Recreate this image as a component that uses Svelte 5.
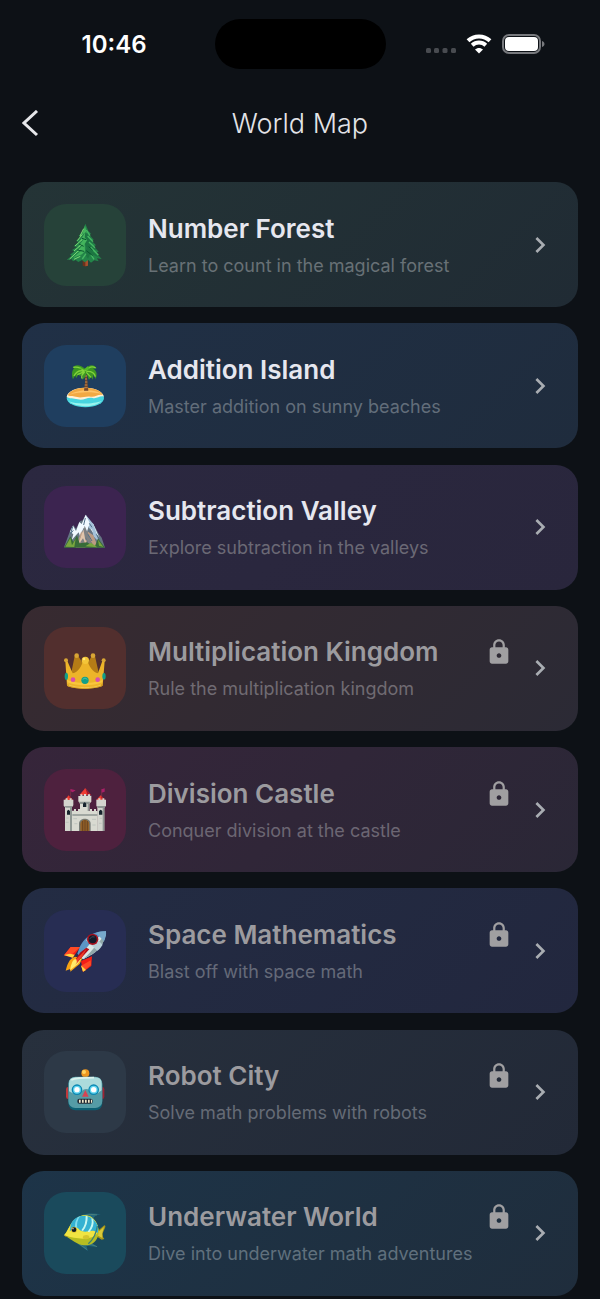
<script>
    let worlds = [
        { id: "forest", title: "Number Forest", text: "Learn to count in the magical forest", locked: false },
        { id: "island", title: "Addition Island", text: "Master addition on sunny beaches", locked: false },
        { id: "valley", title: "Subtraction Valley", text: "Explore subtraction in the valleys", locked: false },
        { id: "kingdom", title: "Multiplication Kingdom", text: "Rule the multiplication kingdom", locked: true },
        { id: "castle", title: "Division Castle", text: "Conquer division at the castle", locked: true },
        { id: "space", title: "Space Mathematics", text: "Blast off with space math", locked: true },
        { id: "robot", title: "Robot City", text: "Solve math problems with robots", locked: true },
        { id: "water", title: "Underwater World", text: "Dive into underwater math adventures", locked: true }
    ];
</script>

<div class="screen">
    <div class="status-bar">
        <span class="time">10:46</span>
        <div class="camera"></div>
        <div class="signals">
            <svg class="dots" viewBox="0 0 30 6" aria-hidden="true">
                <rect x="0" y="0" width="5" height="5" rx="1.5" />
                <rect x="8" y="0" width="5" height="5" rx="1.5" />
                <rect x="16.500" y="0" width="5" height="5" rx="1.5" />
                <rect x="25" y="0" width="5" height="5" rx="1.5" />
            </svg>
            <svg class="wifi" viewBox="0 0 26 20" aria-hidden="true">
                <path d="M2 6.800C8.200 .9 17.800 .9 24 6.800" />
                <path d="M6.200 11.200C10 7.700 16 7.700 19.800 11.200" />
                <path class="tip" d="M13 19.500L9 15.500C11.200 13.400 14.800 13.400 17 15.500Z" />
            </svg>
            <svg class="battery" viewBox="0 0 43 20" aria-hidden="true">
                <rect class="shell" x="1" y="1" width="37" height="18" rx="6" />
                <rect x="3" y="3" width="33" height="14" rx="4" fill="#fff" />
                <path d="M40 7C43.300 8 43.300 12 40 13Z" fill="#77797d" />
            </svg>
        </div>
    </div>

    <header>
        <button class="back" aria-label="Back">
            <svg viewBox="0 0 18 28" aria-hidden="true"><path d="M15 1L2 13L15 25" /></svg>
        </button>
        <h1>World Map</h1>
    </header>

    <ul class="worlds">
        {#each worlds as world}
            <li>
                <button class="card {world.id}" class:locked={world.locked}>
                    <span class="badge">
                        <svg viewBox="0 0 132 132" aria-hidden="true">
                            {#if world.id === "forest"}
                                <path d="M59 106H75V128Q67 132 59 128Z" fill="#6b321d" />
                                <path d="M67 106H75V128L67 130Z" fill="#a4502d" />
                                <path d="M67 2L76 24L84 32L79 35L92 50L86 53L99 67L92 70L107 86L99 89L116 108L102 106L107 115L94 112L84 119L76 111L65 118L57 111L46 117L38 111L30 115L26 109L11 111L26 98L21 95L34 85L27 81L42 72L32 70L46 57L39 54L52 43L47 39L58 27Z" fill="#238449" />
                                <path d="M66 8L57 35L66 29L50 56L63 48L43 74L60 65L38 90L58 80L29 105L57 94L66 84L65 63L72 52L66 42L71 29Z" fill="#43b45c" />
                                <path d="M67 27L85 46L71 40L93 64L75 58L102 82L78 75L110 104L82 92L75 107L66 94L71 75L66 64L73 52L65 43Z" fill="#1d7542" />
                                <path d="M62 17L51 39M58 34L43 53M57 50L36 69M55 65L33 84M50 80L20 108M52 100L33 109" stroke="#7edb75" stroke-width="3" />
                                <path d="M70 21L81 38M74 39L90 56M78 57L96 74M83 73L106 96M69 92L58 108M84 95L93 109" stroke="#46b863" stroke-width="4" />
                                <path d="M48 63L62 70M43 81L63 85M77 71L89 82M70 83L89 98M57 46L69 50" stroke="#09542e" stroke-width="3" />
                            {:else if world.id === "island"}
                                <ellipse cx="67" cy="102" rx="56" ry="28" fill="#48d5df" />
                                <path d="M11 99C16 64 113 61 123 98C111 94 102 105 89 102C72 98 63 111 44 106C31 102 21 105 11 99Z" fill="#fff1d6" />
                                <path d="M14 94C26 64 105 63 120 93C106 89 96 101 83 98C68 95 56 103 43 99C31 97 22 99 14 94Z" fill="#f2a943" />
                                <path d="M20 92C43 76 94 73 116 90C91 83 50 83 20 92Z" fill="#ffc46a" />
                                <path d="M17 112C42 132 94 132 117 110C93 120 42 122 17 112Z" fill="#98f4ee" />
                                <path d="M64 27C70 43 65 65 63 80H76C73 57 74 40 69 26Z" fill="#75472b" />
                                <path d="M66 36H72M66 45H72M66 54H73M65 63H73M64 71H74" stroke="#c58a4a" stroke-width="3" />
                                <path d="M67 15C54 1 34 0 29 11L34 13C26 19 25 33 30 46L37 33L39 43L47 31L51 37L60 29L58 47L67 38L70 28L78 47L84 39L90 47L91 32L98 45C105 27 98 17 90 14L101 13C94 0 77 1 67 15Z" fill="#3c9721" />
                                <path d="M31 10C44 7 55 12 65 22C49 17 39 24 33 36M67 21C79 7 89 6 98 12M70 22C86 21 95 28 97 38M65 24C56 32 55 40 58 44M70 25L84 40M64 23L43 32" fill="none" stroke="#83d33b" stroke-width="4" />
                                <path d="M47 13L53 9L61 18L74 7L80 12L72 20Z" fill="#55b928" />
                            {:else if world.id === "valley"}
                                <path d="M3 127L23 73L31 60L39 71L51 48L59 46L68 29L83 52L91 57L107 86L116 98L126 128Z" fill="#657583" />
                                <path d="M68 29L56 57L49 51L39 78L30 62L21 80L31 88L26 105L47 82L51 94L62 68L70 87L77 64L91 85L88 69L109 98L91 57L83 52Z" fill="#f0f8ff" />
                                <path d="M68 29L80 53L77 69L88 74L91 94L108 111L100 83L91 57Z" fill="#a4c1d9" />
                                <path d="M55 78L38 128H67L72 107L60 98ZM73 79L79 101L94 126H105L91 91Z" fill="#bc9b83" />
                                <path d="M65 62L61 80L50 102L56 127L69 97L78 119L89 126L78 93Z" fill="#7f8183" />
                                <path d="M61 73L54 94L43 124L60 100L73 126L66 100Z" fill="#e2c5ab" />
                                <path d="M3 128L22 94L31 111L42 91L50 115L72 112L95 126L105 100L126 128Z" fill="#386c38" />
                                <path d="M7 125L22 99L27 121L38 101L34 126ZM67 124L84 113L103 127ZM105 104L121 126L108 122Z" fill="#79a63f" />
                                <path d="M29 65L23 86L31 76M67 39L62 60M79 55L87 67M75 88L87 108M100 88L111 106" fill="none" stroke="#506f89" stroke-width="3" />
                            {:else if world.id === "kingdom"}
                                <path d="M35 31H46L61 54L66 42L72 54L86 31H96L108 84V104H24V84Z" fill="#b57c16" />
                                <path d="M7 45H13L29 82C45 79 57 61 61 40H72C77 61 90 79 105 82L118 45H125L119 119C94 131 36 131 12 119Z" fill="#edb429" />
                                <path d="M12 101C35 113 95 114 119 101L118 109C91 121 40 121 13 109Z" fill="#f8c63e" />
                                <path d="M13 114C39 127 95 127 118 114V120C94 131 36 131 13 120Z" fill="#d49a1e" />
                                <path d="M17 117C41 127 90 128 114 117" fill="none" stroke="#ffdf68" stroke-width="2" />
                                <g fill="#d8a535"><circle cx="9" cy="43" r="6" /><circle cx="122" cy="43" r="6" /><circle cx="41" cy="29" r="7" /><circle cx="90" cy="29" r="7" /></g>
                                <circle cx="67" cy="43" r="11" fill="#f4c538" />
                                <circle cx="63" cy="39" r="4" fill="#ffe878" />
                                <g fill="#109f88"><ellipse cx="10" cy="91" rx="5" ry="11" /><circle cx="66" cy="103" r="11" /><ellipse cx="123" cy="91" rx="5" ry="10" /></g>
                                <circle cx="30" cy="101" r="7" fill="#d94eab" />
                                <circle cx="104" cy="101" r="7" fill="#d94eab" />
                                <path d="M59 100Q66 92 73 100" fill="none" stroke="#4cc5a6" stroke-width="3" />
                            {:else if world.id === "castle"}
                                <path d="M23 26V3M66 20V0M116 26V3" stroke="#8d344c" stroke-width="2" />
                                <path d="M23 3L38 7L29 13L23 10ZM116 4L125 1V11L116 14Z" fill="#a81f68" />
                                <path d="M5 36L17 22L30 36ZM49 21L67 1L84 21ZM100 36L113 22L127 36Z" fill="#ef3d32" />
                                <path d="M67 1L74 21H84ZM18 23L22 36H30ZM113 23L118 36H127Z" fill="#9f192b" />
                                <path d="M46 24H52V19H58V23H63V18H69V23H75V19H81V23H85V41L79 47V76H51V47L46 40Z" fill="#dadbd2" />
                                <path d="M2 35H8V31H14V36H20V31H26V35H31V52L27 58V129H6V58L2 53ZM100 35H106V31H112V35H118V31H124V35H129V53L124 59V129H103V58L100 53Z" fill="#d3d4cd" />
                                <path d="M27 68H33V63H39V69H45V63H51V69H57V63H63V69H69V63H75V69H81V63H87V69H93V63H99V69H104V129H27Z" fill="#d9dad1" />
                                <path d="M21 58H27V129H21ZM74 43H79V69H74ZM119 58H124V129H119ZM28 79H103V83H28ZM4 54H27V59H8ZM47 41H82L78 48H52ZM101 54H127L124 60H105Z" fill="#8f9793" />
                                <path d="M48 129V107C48 87 83 87 83 107V129Z" fill="#777b76" />
                                <path d="M52 129V109C52 91 79 91 79 109V129Z" fill="#936027" />
                                <path d="M59 99V129M66 96V129M73 99V129" stroke="#54371e" stroke-width="2" />
                                <path d="M60 57V48Q65 38 70 48V57ZM12 80V70Q16 60 21 70V80ZM108 80V70Q113 60 118 70V80Z" fill="#17242d" />
                                <path d="M10 90H17M8 103H17M31 92H42M34 107H43M87 94H99M88 111H98M110 91H117M108 106H116" stroke="#b4bbb6" stroke-width="2" />
                            {:else if world.id === "space"}
                                <path d="M52 54H23L3 79L29 86ZM87 82L85 111L60 129L54 96Z" fill="#f51e16" />
                                <path d="M23 54L3 79L24 79L52 54ZM54 111L60 128L84 108L83 94Z" fill="#ff4b25" />
                                <path d="M3 78L29 86L35 77L21 74ZM54 109L60 128L69 123Z" fill="#ffd642" />
                                <path d="M36 83C17 90 13 107 8 125L22 120L22 128L39 114L50 105L58 88Z" fill="#f7a313" />
                                <path d="M36 91C27 94 23 112 21 124L44 106L55 90Z" fill="#ffeb6b" />
                                <path d="M129 7C104 6 80 16 64 33C49 49 48 64 43 74L60 91L78 81C105 69 126 42 129 7Z" fill="#5c96c6" />
                                <path d="M129 7L108 23C80 39 67 60 54 84L60 91L78 81C105 69 126 42 129 7Z" fill="#dae7e6" />
                                <path d="M128 14C111 35 87 66 60 91L78 81C105 69 126 42 128 14Z" fill="#90a7a9" />
                                <path d="M69 34C75 26 84 22 91 20L119 47C115 53 110 60 103 65Z" fill="#b8d0d9" />
                                <path d="M99 12L123 37C128 26 130 17 129 7C119 7 108 8 99 12Z" fill="#76a8cc" />
                                <circle cx="89" cy="31" r="17" fill="#a7121f" />
                                <circle cx="89" cy="31" r="12" fill="#131a29" />
                                <path d="M79 31Q86 19 95 24" fill="none" stroke="#3b4658" stroke-width="3" />
                                <path d="M38 91L51 71L70 56L79 61L61 80L37 107L48 90Z" fill="#b40c18" />
                                <path d="M40 90L71 59L59 81L42 101Z" fill="#ed3b27" />
                            {:else if world.id === "robot"}
                                <rect x="9" y="51" width="20" height="36" rx="7" fill="#c0393d" />
                                <rect x="106" y="51" width="18" height="36" rx="7" fill="#9d2434" />
                                <path d="M52 23Q67 14 81 23L77 31H57Z" fill="#704475" />
                                <circle cx="67" cy="10" r="12" fill="#ed9620" />
                                <circle cx="63" cy="6" r="6" fill="#ffd35f" />
                                <rect x="16" y="23" width="102" height="98" rx="21" fill="#0d6073" />
                                <rect x="16" y="20" width="102" height="94" rx="21" fill="#559ca6" />
                                <path d="M18 57V41Q18 22 37 22H97Q116 22 116 41V61Q105 73 91 69L81 61Q66 52 56 64Q42 79 18 64Z" fill="#acdbdc" />
                                <path d="M25 30Q38 23 93 23" fill="none" stroke="#dbf2ed" stroke-width="5" />
                                <g fill="#0b87b2"><circle cx="42" cy="59" r="16" /><circle cx="92" cy="59" r="16" /></g>
                                <g fill="#61d5f0"><circle cx="42" cy="59" r="12" /><circle cx="92" cy="59" r="12" /></g>
                                <g fill="#fff"><circle cx="42" cy="59" r="8" /><circle cx="92" cy="59" r="8" /></g>
                                <path d="M67 60L77 80H57Z" fill="#d74453" />
                                <rect x="43" y="86" width="46" height="15" rx="6" fill="#252c37" />
                                <path d="M48 89H53V98H48ZM57 89H62V98H57ZM66 89H71V98H66ZM75 89H80V98H75ZM84 89H87V98H84Z" fill="#f1e9ca" />
                            {:else}
                                <path d="M39 24C57 5 86 5 114 10C98 11 93 16 87 32ZM44 99L75 120L70 104L104 108L82 93Z" fill="#22697f" />
                                <path d="M44 25C66 9 88 9 102 12M49 99L72 116M78 98L102 107" fill="none" stroke="#5f8877" stroke-width="2" />
                                <path d="M98 65L124 43Q128 44 127 48L119 67Q118 78 124 84L116 86L99 75Z" fill="#a99819" />
                                <path d="M102 66L123 48L117 69L118 81L105 74Z" fill="#d8ca38" />
                                <path d="M3 73C20 55 22 24 56 14C88 6 109 38 107 65C104 96 76 112 45 98C30 91 17 81 3 73Z" fill="#b7bd22" />
                                <path d="M3 73C20 55 22 24 56 14C88 6 108 37 106 62C89 89 49 87 3 73Z" fill="#f1e442" />
                                <path d="M23 41C34 10 76 5 95 29C107 42 106 57 105 66C86 51 76 66 59 61C46 59 45 43 34 52L20 61Z" fill="#35b2d2" />
                                <path d="M68 14Q69 41 55 58L60 60Q75 42 74 16ZM85 21Q90 43 74 62L79 64Q95 45 91 26Z" fill="#c7f8f1" />
                                <path d="M45 19Q35 31 36 49L43 52Q39 33 51 16Z" fill="#82dced" />
                                <path d="M103 45Q98 80 76 98" fill="none" stroke="#3b8177" stroke-width="4" />
                                <path d="M3 73L17 77L7 77Z" fill="#967f22" />
                                <circle cx="33" cy="56" r="9" fill="#e0bd35" />
                                <circle cx="33" cy="56" r="7" fill="#111b21" />
                                <circle cx="30" cy="53" r="2" fill="#fff" />
                                <path d="M61 74Q77 68 80 79Q73 89 59 82" fill="#d6c52d" />
                            {/if}
                        </svg>
                    </span>
                    <span class="info">
                        <span class="title">{world.title}</span>
                        <span class="text">{world.text}</span>
                        {#if world.locked}
                            <svg class="lock" viewBox="0 0 24 24" role="img" aria-label="Locked">
                                <path d="M18 8h-1V6c0-2.760-2.240-5-5-5S7 3.240 7 6v2H6c-1.100 0-2 .9-2 2v10c0 1.100.9 2 2 2h12c1.100 0 2-.9 2-2V10c0-1.100-.9-2-2-2zm-6 9c-1.100 0-2-.9-2-2s.9-2 2-2 2 .9 2 2-.9 2-2 2zm3.100-9H8.900V6c0-1.710 1.390-3.100 3.100-3.100s3.100 1.390 3.100 3.100v2z" />
                            </svg>
                        {/if}
                    </span>
                    <svg class="chevron" viewBox="0 0 24 24" aria-hidden="true">
                        <path d="M10 6L8.590 7.410 13.170 12l-4.580 4.590L10 18l6-6z" />
                    </svg>
                </button>
            </li>
        {/each}
    </ul>
</div>

<style>
:global(body) {
    margin: 0;
    background: #0d1116;
}

.screen {
    display: flex;
    flex-direction: column;
    box-sizing: border-box;
    min-height: 100vh;
    padding-top: 19px;
    background: #0d1116;
    color: #e6e7ef;
    font-family: Inter, "Liberation Sans", sans-serif;
}

button {
    padding: 0;
    border: none;
    background: none;
    color: inherit;
    font: inherit;
    text-align: left;
    cursor: pointer;
}

/* status bar */
.status-bar {
    display: grid;
    grid-template-columns: 1fr auto 1fr;
    align-items: center;
}

.time {
    justify-self: end;
    padding-top: 2px;
    padding-right: 68px;
    color: #fff;
    font-size: 24px;
    font-weight: 600;
    line-height: 48px;
}

.camera {
    width: 171px;
    height: 50px;
    border-radius: 25px;
    background: #000;
}

.signals {
    display: flex;
    align-items: center;
    justify-content: flex-end;
    gap: 10px;
    padding-right: 55px;
}

.dots {
    width: 30px;
    height: 6px;
    padding-top: 13px;
    fill: #484b50;
}

.wifi {
    width: 26px;
    height: 20px;
    fill: none;
    stroke: #fff;
    stroke-width: 4;
}

.wifi .tip {
    fill: #fff;
    stroke: none;
}

.battery {
    width: 43px;
    height: 20px;
}

.shell {
    fill: none;
    stroke: #77797d;
    stroke-width: 2;
}

/* page header */
header {
    display: grid;
    grid-template-columns: 1fr auto 1fr;
    align-items: center;
    height: 110px;
    padding: 0 22px;
}

.back {
    justify-self: start;
    display: flex;
}

.back svg {
    width: 18px;
    height: 28px;
    fill: none;
    stroke: #e6e7ea;
    stroke-width: 3;
}

h1 {
    margin: 0;
    color: #e3e4e8;
    font-size: 27px;
    font-weight: 300;
    line-height: 36px;
}

/* world cards */
.worlds {
    flex: 1;
    display: flex;
    flex-direction: column;
    justify-content: space-between;
    margin: 0;
    padding: 3px 22px;
    list-style: none;
}

.card {
    display: flex;
    align-items: center;
    box-sizing: border-box;
    width: 100%;
    min-height: 125px;
    padding: 21px 22px;
    border-radius: 22px;
    background: linear-gradient(135deg, var(--from), var(--to));
}

.badge {
    display: flex;
    flex: none;
    align-items: center;
    justify-content: center;
    width: 82px;
    height: 82px;
    margin-right: 22px;
    border-radius: 22px;
    background: var(--badge);
}

.badge svg {
    width: 44px;
    height: 44px;
    overflow: visible;
}

.info {
    flex: 1;
    display: grid;
    grid-template-columns: 1fr auto;
    align-items: center;
    row-gap: 8px;
    padding-top: 2px;
}

.title {
    grid-area: 1 / 1;
    font-size: 26px;
    font-weight: 600;
    line-height: 32px;
}

.text {
    grid-area: 2 / 1 / 3 / 3;
    color: var(--muted);
    font-size: 18px;
    line-height: 26px;
}

.lock {
    grid-area: 1 / 2;
    width: 28px;
    height: 28px;
    fill: #a09fa1;
}

.chevron {
    flex: none;
    width: 32px;
    height: 32px;
    margin-left: 11px;
    fill: #a9adb2;
}

.locked .title {
    color: #9c9b9f;
}

.forest {
    --from: #243436;
    --to: #202b34;
    --badge: #264239;
    --muted: #687176;
}

.island {
    --from: #203046;
    --to: #1f2c3d;
    --badge: #1f3e5f;
    --muted: #626d7a;
}

.valley {
    --from: #2b2840;
    --to: #29263c;
    --badge: #3c2450;
    --muted: #6b6975;
}

.kingdom {
    --from: #372a30;
    --to: #2b2a35;
    --badge: #522f2e;
    --muted: #706b72;
}

.castle {
    --from: #36253a;
    --to: #2a2736;
    --badge: #4e213e;
    --muted: #6c6673;
}

.space {
    --from: #232c43;
    --to: #22273e;
    --badge: #272d53;
    --muted: #656a79;
}

.robot {
    --from: #27303d;
    --to: #222937;
    --badge: #2d3947;
    --muted: #656b76;
}

.water {
    --from: #1d3448;
    --to: #1f2d3c;
    --badge: #1a4a5c;
    --muted: #60707d;
}
</style>
